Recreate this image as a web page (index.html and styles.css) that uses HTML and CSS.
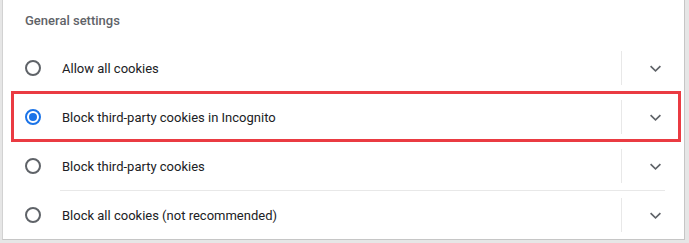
FILE: index.html
```html
<!DOCTYPE html>
<html lang="en">
<head>
  <meta charset="UTF-8">
  <title>Cookies</title>
  <link rel="stylesheet" href="styles.css">
</head>
<body>

  <div class="panel">
    <div class="heading">General settings</div>

    <div class="row">
      <span class="radio"></span>
      <span class="label">Allow all cookies</span>
      <span class="divider"></span>
      <span class="chev"><svg width="11" height="7" viewBox="0 0 11 7"><path d="M1.2 0.5 L5.5 4.8 L9.8 0.5 L11 1.7 L5.5 7 L0 1.7 Z" fill="#5f6368"/></svg></span>
    </div>

    <div class="row highlight">
      <span class="radio checked"></span>
      <span class="label">Block third-party cookies in Incognito</span>
      <span class="divider"></span>
      <span class="chev"><svg width="11" height="7" viewBox="0 0 11 7"><path d="M1.2 0.5 L5.5 4.8 L9.8 0.5 L11 1.7 L5.5 7 L0 1.7 Z" fill="#5f6368"/></svg></span>
    </div>

    <div class="row">
      <span class="radio"></span>
      <span class="label">Block third-party cookies</span>
      <span class="divider"></span>
      <span class="chev"><svg width="11" height="7" viewBox="0 0 11 7"><path d="M1.2 0.5 L5.5 4.8 L9.8 0.5 L11 1.7 L5.5 7 L0 1.7 Z" fill="#5f6368"/></svg></span>
    </div>

    <div class="row">
      <span class="radio"></span>
      <span class="label">Block all cookies (not recommended)</span>
      <span class="divider"></span>
      <span class="chev"><svg width="11" height="7" viewBox="0 0 11 7"><path d="M1.2 0.5 L5.5 4.8 L9.8 0.5 L11 1.7 L5.5 7 L0 1.7 Z" fill="#5f6368"/></svg></span>
    </div>
  </div>

</body>
</html>
```

FILE: styles.css
```css
html, body {
  margin: 0;
  height: 100%;
}
body {
  font-family: Roboto, "Liberation Sans", Arial, sans-serif;
  background-color: #e6e6e6;
  padding: 0 4px 3px 2px;
  box-sizing: border-box;
}
.panel {
  background: #fff;
  border-left: 1px solid #d2d2d2;
  border-right: 1px solid #c6c6c6;
  border-bottom: 1px solid #c6c6c6;
  height: 100%;
  box-sizing: border-box;
  position: relative;
}
.heading {
  height: 44px;
  padding-left: 22px;
  line-height: 42px;
  font-size: 13px;
  font-weight: 500;
  color: #5f6368;
}
.row {
  display: flex;
  align-items: center;
  height: 48px;
  padding-left: 22px;
  position: relative;
}
.row + .row::before {
  content: "";
  position: absolute;
  top: -1px;
  left: 57px;
  right: 19px;
  border-top: 1px solid #e8e8e8;
}
.row + .row {
  margin-top: 1px;
}
.radio {
  width: 16px;
  height: 16px;
  border: 2px solid #5f6368;
  border-radius: 50%;
  box-sizing: border-box;
  flex: none;
  display: flex;
  align-items: center;
  justify-content: center;
}
.radio.checked {
  border-color: #1a73e8;
}
.radio.checked::after {
  content: "";
  width: 8px;
  height: 8px;
  border-radius: 50%;
  background: #1a73e8;
}
.label {
  margin-left: 21px;
  font-size: 13px;
  color: #202124;
  flex: 1;
}
.divider {
  width: 1px;
  height: 34px;
  background: #e8e8e8;
  flex: none;
}
.chev {
  width: 58px;
  padding-left: 4px;
  display: flex;
  justify-content: center;
  flex: none;
}
.chev svg {
  display: block;
}
.highlight::after {
  content: "";
  position: absolute;
  left: 8px;
  right: 3px;
  top: -2px;
  bottom: -1px;
  border: 3px solid #ea3b42;
  z-index: 2;
}
```
